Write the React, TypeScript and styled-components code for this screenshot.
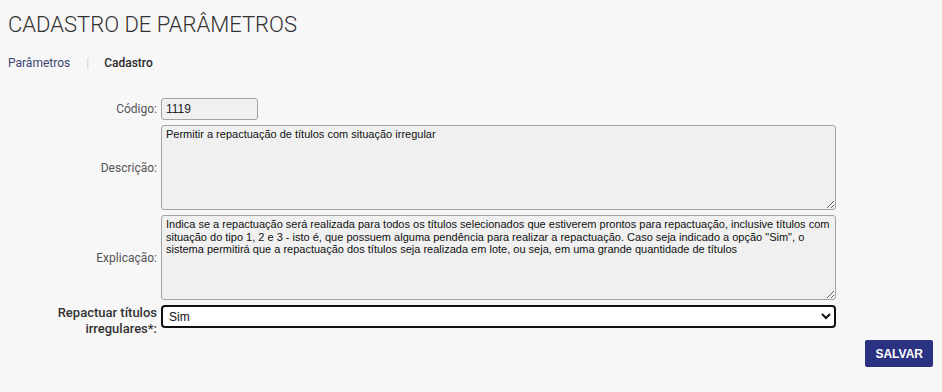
import React from 'react';
import styled, { createGlobalStyle } from 'styled-components';

const GlobalStyle = createGlobalStyle`
  html, body {
    margin: 0;
    padding: 0;
    background: #f7f7f7;
  }
  body {
    font-family: Roboto, "Liberation Sans", Arial, sans-serif;
    color: #333;
  }
`;

const Page = styled.div`
  padding: 11px 9px 20px 8px;
  width: 942px;
  box-sizing: border-box;
`;

const Title = styled.h1`
  margin: 0;
  font-size: 22px;
  font-weight: 300;
  color: #333;
  line-height: 28px;
`;

const Breadcrumb = styled.nav`
  display: flex;
  align-items: center;
  margin-top: 16px;
  font-size: 12px;
  line-height: 16px;
`;

const Crumb = styled.span<{ $current?: boolean }>`
  color: ${p => (p.$current ? '#2a2a2a' : '#3a4573')};
  font-weight: ${p => (p.$current ? 500 : 400)};
`;

const Separator = styled.span`
  color: #cfcfcf;
  margin: 0 15px 0 16px;
`;

const Form = styled.form`
  display: grid;
  grid-template-columns: 149px 675px;
  column-gap: 4px;
  row-gap: 5px;
  margin-top: 27px;
`;

const Label = styled.label<{ $strong?: boolean }>`
  align-self: center;
  text-align: right;
  font-size: ${p => (p.$strong ? '13px' : '12px')};
  font-weight: ${p => (p.$strong ? 500 : 400)};
  color: ${p => (p.$strong ? '#333' : '#555')};
  line-height: ${p => (p.$strong ? '16px' : '14px')};
  padding-left: ${p => (p.$strong ? '48px' : '0')};
`;

const TextInput = styled.input`
  width: 97px;
  height: 22px;
  box-sizing: border-box;
  border: 1px solid #a3a3a3;
  border-radius: 3px;
  background: #f0f0f0;
  padding: 0 4px;
  font-family: "Liberation Sans", Arial, sans-serif;
  font-size: 12px;
  color: #222;
  outline: none;
`;

const TextArea = styled.textarea`
  width: 675px;
  height: 85px;
  box-sizing: border-box;
  border: 1px solid #a3a3a3;
  border-radius: 3px;
  background: #f0f0f0;
  padding: 2px 4px;
  font-family: "Liberation Sans", Arial, sans-serif;
  font-size: 11px;
  line-height: 12.6px;
  color: #111;
  outline: none;
  resize: vertical;
  display: block;
`;

const Select = styled.select`
  width: 675px;
  height: 23px;
  box-sizing: border-box;
  border: 2px solid #111;
  border-radius: 4px;
  background: #fff;
  padding: 0 2px;
  font-family: "Liberation Sans", Arial, sans-serif;
  font-size: 12px;
  color: #111;
  outline: none;
`;

const Actions = styled.div`
  display: flex;
  justify-content: flex-end;
  margin-top: 3px;
`;

const Button = styled.button`
  height: 27px;
  padding: 0 10px;
  min-width: 66px;
  border: none;
  border-radius: 2px;
  background: #2b3281;
  color: #fff;
  font-family: "Liberation Sans", Arial, sans-serif;
  font-size: 12px;
  font-weight: 700;
  cursor: pointer;
`;

const explicacao =
  'Indica se a repactuação será realizada para todos os títulos selecionados que estiverem prontos para repactuação, inclusive títulos com situação do tipo 1, 2 e 3 - isto é, que possuem alguma pendência para realizar a repactuação. Caso seja indicado a opção "Sim", o sistema permitirá que a repactuação dos títulos seja realizada em lote, ou seja, em uma grande quantidade de títulos';

const App: React.FC = () => {
  return (
    <>
      <GlobalStyle />
      <Page>
        <Title>CADASTRO DE PARÂMETROS</Title>
        <Breadcrumb>
          <Crumb>Parâmetros</Crumb>
          <Separator>|</Separator>
          <Crumb $current>Cadastro</Crumb>
        </Breadcrumb>
        <Form onSubmit={e => e.preventDefault()}>
          <Label htmlFor="codigo">Código:</Label>
          <TextInput id="codigo" value="1119" readOnly />

          <Label htmlFor="descricao">Descrição:</Label>
          <TextArea
            id="descricao"
            readOnly
            value="Permitir a repactuação de títulos com situação irregular"
          />

          <Label htmlFor="explicacao">Explicação:</Label>
          <TextArea id="explicacao" readOnly value={explicacao} />

          <Label htmlFor="repactuar" $strong>
            Repactuar títulos irregulares*:
          </Label>
          <Select id="repactuar" defaultValue="sim">
            <option value="sim">Sim</option>
            <option value="nao">Não</option>
          </Select>
        </Form>
        <Actions>
          <Button type="button">SALVAR</Button>
        </Actions>
      </Page>
    </>
  );
};

export default App;
